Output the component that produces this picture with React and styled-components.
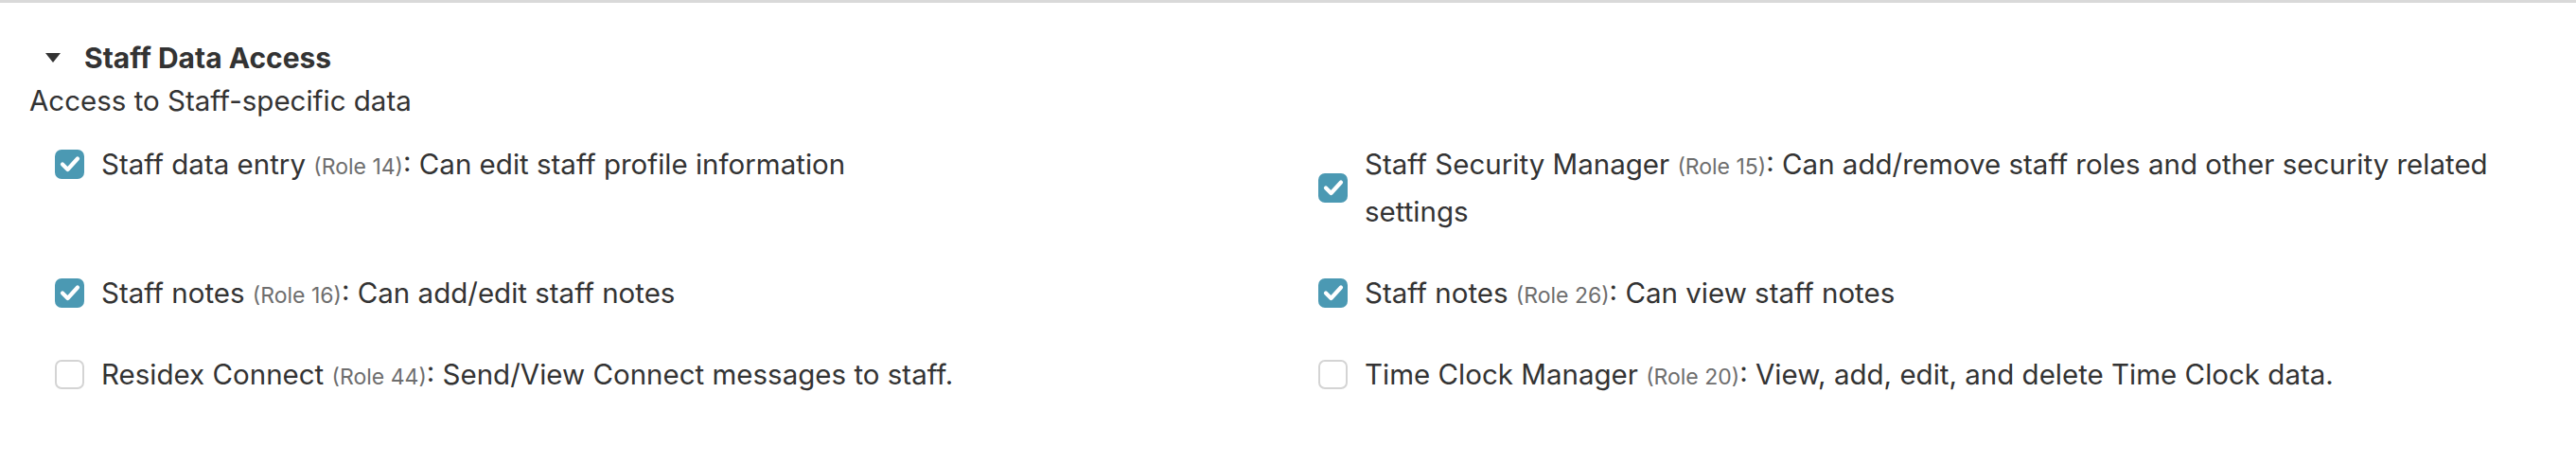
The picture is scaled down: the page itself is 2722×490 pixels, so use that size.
import React, { useState } from "react";
import styled, { createGlobalStyle } from "styled-components";

const GlobalStyle = createGlobalStyle`
	html, body {
		margin: 0;
		padding: 0;
		background: #ffffff;
	}
	body {
		font-family: Inter, "Noto Sans", "Liberation Sans", sans-serif;
		color: #333333;
	}
`;

const roles = [
	{ id: 14, name: "Staff data entry", desc: "Can edit staff profile information", on: true },
	{ id: 15, name: "Staff Security Manager", desc: "Can add/remove staff roles and other security related settings", on: true },
	{ id: 16, name: "Staff notes", desc: "Can add/edit staff notes", on: true },
	{ id: 26, name: "Staff notes", desc: "Can view staff notes", on: true },
	{ id: 44, name: "Residex Connect", desc: "Send/View Connect messages to staff.", on: false },
	{ id: 20, name: "Time Clock Manager", desc: "View, add, edit, and delete Time Clock data.", on: false },
];

const Section = styled.section`
	border-top: 3px solid #d9d9d9;
	padding: 38px 31px 40px 31px;
`;

const Header = styled.div`
	display: flex;
	align-items: center;
	gap: 25px;
	padding-left: 17px;
	height: 40px;
	cursor: pointer;
`;

const Caret = styled.span`
	width: 0;
	height: 0;
	border-left: 8.5px solid transparent;
	border-right: 8.5px solid transparent;
	border-top: 10px solid #333333;
	transform: ${({ open }) => (open ? "none" : "rotate(-90deg)")};
`;

const Title = styled.h2`
	margin: 0;
	font-size: 30px;
	font-weight: 700;
	line-height: 40px;
	color: #333333;
`;

const Description = styled.p`
	margin: 5px 0 0 0;
	font-size: 29.5px;
	line-height: 40px;
`;

const List = styled.div`
	display: grid;
	grid-template-columns: 1fr 1fr;
	align-items: start;
	column-gap: 37px;
	row-gap: 36px;
	margin-top: 22px;
	padding-left: 27px;
`;

const Item = styled.label`
	display: flex;
	align-items: center;
	gap: 18px;
	cursor: pointer;
`;

const Box = styled.span`
	flex: none;
	width: 31px;
	height: 31px;
	box-sizing: border-box;
	border-radius: 7px;
	display: flex;
	align-items: center;
	justify-content: center;
	background: ${({ checked }) => (checked ? "#4b99b3" : "#ffffff")};
	border: ${({ checked }) => (checked ? "none" : "2px solid #d4d4d4")};
`;

const Text = styled.span`
	font-size: 29.5px;
	line-height: 50px;
	color: #333333;
`;

const Role = styled.span`
	font-size: 23px;
	line-height: 1;
	color: #6e6e6e;
`;

function Check() {
	return (
		<svg width="22" height="18" viewBox="0 0 22 18">
			<path
				d="M3 9.5 L8.5 15 L19 3.5"
				fill="none"
				stroke="#ffffff"
				strokeWidth="4.2"
				strokeLinecap="round"
				strokeLinejoin="round"
			/>
		</svg>
	);
}

export default function App() {
	const [open, setOpen] = useState(true);
	const [checked, setChecked] = useState(roles.map((r) => r.on));

	const toggle = (i) => {
		const next = [...checked];
		next[i] = !next[i];
		setChecked(next);
	};

	return (
		<>
			<GlobalStyle />
			<Section>
				<Header onClick={() => setOpen(!open)}>
					<Caret open={open} />
					<Title>Staff Data Access</Title>
				</Header>
				<Description>Access to Staff-specific data</Description>
				{open && (
					<List>
						{roles.map((r, i) => (
							<Item key={r.id} onClick={() => toggle(i)}>
								<Box checked={checked[i]}>{checked[i] && <Check />}</Box>
								<Text>
									{r.name} <Role>(Role {r.id})</Role>: {r.desc}
								</Text>
							</Item>
						))}
					</List>
				)}
			</Section>
		</>
	);
}
